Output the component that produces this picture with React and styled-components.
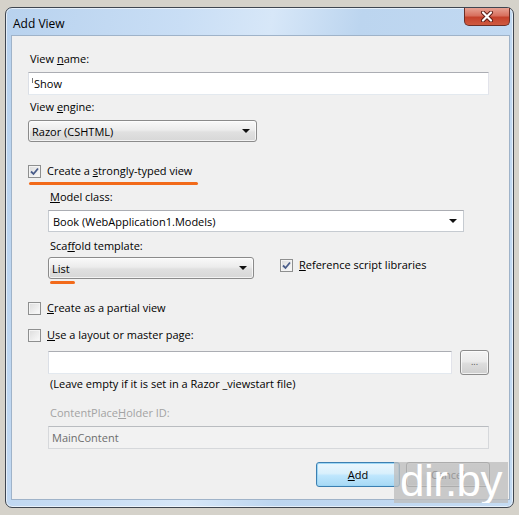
import React from 'react'
import styled, { createGlobalStyle } from 'styled-components'

const GlobalStyle = createGlobalStyle`
    body {
        margin: 0;
        background: #d5d2ca;
        font-family: "Open Sans", "Noto Sans", sans-serif;
        font-size: 11px;
        color: #000;
    }
`
const Page = styled.div`
    width: 519px;
    height: 515px;
    padding: 7px 0 0 5px;
    box-sizing: border-box;
`
const Window = styled.div`
    position: relative;
    width: 509px;
    height: 501px;
    box-sizing: border-box;
    border: 1px solid #3f4650;
    border-radius: 7px;
    padding: 0 3px 7px 5px;
    display: flex;
    flex-direction: column;
    background: linear-gradient(100deg, #b8d2ee 0%, #c9def5 30%, #d7e7f8 45%, #bcd5ef 60%, #c4dbf3 100%);
    box-shadow: inset 0 0 0 1px rgba(255,255,255,0.6);
`
const TitleBar = styled.div`
    height: 27px;
    display: flex;
    align-items: flex-start;
    justify-content: space-between;
`
const Title = styled.div`
    font-size: 12px;
    padding: 8px 0 0 2px;
    line-height: 16px;
`
const CloseButton = styled.div`
    width: 46px;
    height: 18px;
    box-sizing: border-box;
    border: 1px solid #6c2e26;
    border-top: none;
    border-radius: 0 0 5px 5px;
    background: linear-gradient(#e7a293 0%, #d8705e 45%, #c5422c 55%, #cf5a40 100%);
    display: flex;
    align-items: center;
    justify-content: center;
`
const Client = styled.div`
    flex: 1;
    border: 1px solid #9fb3c9;
    background: #f0f0f0;
    padding: 0 20px 0 16px;
    display: flex;
    flex-direction: column;
`
const Label = styled.div`
    line-height: 16px;
    height: 16px;
    margin-top: ${p => p.mt}px;
    padding-left: ${p => p.indent ? 22 : 2}px;
    color: ${p => p.disabled ? '#a3a3a3' : '#000'};
    white-space: nowrap;
`
const TextBox = styled.div`
    height: 23px;
    box-sizing: border-box;
    margin-top: ${p => p.mt || 0}px;
    margin-left: ${p => p.indent ? 20 : 0}px;
    flex: ${p => p.grow ? 1 : 'none'};
    border: 1px solid;
    border-color: ${p => p.disabled ? '#b9bcc0 #d6d8db #d6d8db #d6d8db' : '#abadb3 #e2e3ea #e3e9ef #dbdfe6'};
    background: ${p => p.disabled ? '#f2f2f2' : '#fff'};
    color: ${p => p.disabled ? '#6d6d6d' : '#000'};
    padding-left: 3px;
    line-height: 21px;
    display: flex;
    align-items: center;
`
const Caret = styled.span`
    width: 1px;
    height: 5px;
    background: #777;
    margin: -6px 1px 0 0;
`
const Combo = styled.div`
    position: relative;
    width: ${p => p.width}px;
    height: 22px;
    box-sizing: border-box;
    margin-top: ${p => p.mt || 0}px;
    margin-left: ${p => p.indent ? 20 : 0}px;
    border: 1px solid ${p => p.flat ? '#c6cbd1' : '#8b8b8b'};
    border-top-color: ${p => p.flat ? '#abadb3' : '#8b8b8b'};
    border-radius: ${p => p.flat ? 0 : 3}px;
    background: ${p => p.flat ? '#fff' : 'linear-gradient(#f9f9f9 0%, #ececec 45%, #e0e0e0 55%, #d7d7d7 100%)'};
    box-shadow: ${p => p.flat ? 'none' : 'inset 0 0 0 1px rgba(255,255,255,0.7)'};
    display: flex;
    align-items: center;
    justify-content: space-between;
    padding: 0 6px 0 ${p => p.flat ? 4 : 3}px;
`
const Arrow = styled.span`
    width: 0;
    height: 0;
    border-left: 4px solid transparent;
    border-right: 4px solid transparent;
    border-top: 4px solid #111;
`
const Mark = styled.span`
    position: absolute;
    left: ${p => p.left}px;
    bottom: -6px;
    width: ${p => p.width}px;
    height: 3px;
    border-radius: 2px;
    background: #f26a1a;
`
const CheckRow = styled.div`
    position: relative;
    display: flex;
    align-items: center;
    align-self: flex-start;
    height: 16px;
    line-height: 16px;
    margin-top: ${p => p.mt || 0}px;
    margin-left: ${p => p.ml || 0}px;
    gap: 6px;
    white-space: nowrap;
`
const Box = styled.span`
    width: 13px;
    height: 13px;
    box-sizing: border-box;
    border: 1px solid #8e8f8f;
    background: linear-gradient(135deg, #dcdcdc, #fbfbfb);
    box-shadow: inset 0 0 0 1px #f4f4f4;
    display: flex;
    align-items: center;
    justify-content: center;
`
const Row = styled.div`
    display: flex;
    align-items: center;
    margin-top: ${p => p.mt || 0}px;
    margin-left: ${p => p.indent ? 20 : 0}px;
`
const SmallButton = styled.div`
    width: 29px;
    height: 25px;
    box-sizing: border-box;
    margin-left: 8px;
    border: 1px solid #8b8b8b;
    border-radius: 3px;
    background: linear-gradient(#f4f4f4 0%, #ebebeb 45%, #dddddd 55%, #cfcfcf 100%);
    box-shadow: inset 0 0 0 1px rgba(255,255,255,0.7);
    color: #555;
    font-size: 9px;
    display: flex;
    align-items: center;
    justify-content: center;
    padding-bottom: 3px;
`
const ButtonBar = styled.div`
    display: flex;
    justify-content: flex-end;
    gap: 6px;
    margin-top: 13px;
    margin-right: -1px;
`
const Button = styled.div`
    width: 84px;
    height: 25px;
    box-sizing: border-box;
    border: 1px solid ${p => p.primary ? '#3c7fb1' : '#707070'};
    border-radius: 3px;
    background: ${p => p.primary
        ? 'linear-gradient(#eaf6fd 0%, #d9f0fc 45%, #bee6fd 55%, #a7d9f5 100%)'
        : 'linear-gradient(#f2f2f2 0%, #ebebeb 45%, #dddddd 55%, #cfcfcf 100%)'};
    box-shadow: inset 0 0 0 1px ${p => p.primary ? '#9ed7f5' : 'rgba(255,255,255,0.7)'};
    display: flex;
    align-items: center;
    justify-content: center;
    font-size: 11px;
`
const Watermark = styled.div`
    position: absolute;
    left: 388px;
    top: 454px;
    width: 114px;
    height: 41px;
    background: rgba(190, 190, 190, 0.78);
    color: #fff;
    font-family: "Liberation Sans", Arial, sans-serif;
    font-size: 44px;
    line-height: 38px;
    text-align: center;
    overflow: hidden;
    letter-spacing: -0.5px;
`

const Check = ({ checked }) => (
    <Box>
        {checked && (
            <svg width="9" height="9" viewBox="0 0 9 9">
                <path d="M1 4.5 L3.5 7 L8 1.5" fill="none" stroke="#4a5d8a" strokeWidth="1.8" />
            </svg>
        )}
    </Box>
)

const App = () => {
    return (
        <Page>
            <GlobalStyle />
            <Window>
                <TitleBar>
                    <Title>Add View</Title>
                    <CloseButton>
                        <svg width="14" height="11" viewBox="0 0 14 11">
                            <path d="M3 1.5 L11 9.5 M11 1.5 L3 9.5" stroke="#5a1a12" strokeWidth="4" strokeLinecap="round" />
                            <path d="M3 1.5 L11 9.5 M11 1.5 L3 9.5" stroke="#fff" strokeWidth="2.2" strokeLinecap="round" />
                        </svg>
                    </CloseButton>
                </TitleBar>
                <Client>
                    <Label mt={15}>View <u>n</u>ame:</Label>
                    <TextBox mt={5}><Caret />Show</TextBox>
                    <Label mt={4}>View <u>e</u>ngine:</Label>
                    <Combo mt={5} width={229}>Razor (CSHTML)<Arrow /></Combo>

                    <CheckRow mt={21}>
                        <Check checked />
                        <span>Create a <u>s</u>trongly-typed view</span>
                        <Mark left={1} width={169} />
                    </CheckRow>
                    <Label mt={10} indent><u>M</u>odel class:</Label>
                    <Combo mt={5} indent flat width={416}>Book (WebApplication1.Models)<Arrow /></Combo>
                    <Label mt={6} indent>Sca<u>f</u>fold template:</Label>
                    <Row mt={3} indent>
                        <Combo width={206}>
                            List<Arrow />
                            <Mark left={1} width={25} />
                        </Combo>
                        <CheckRow ml={26}>
                            <Check checked />
                            <span><u>R</u>eference script libraries</span>
                        </CheckRow>
                    </Row>

                    <CheckRow mt={21}>
                        <Check />
                        <span><u>C</u>reate as a partial view</span>
                    </CheckRow>
                    <CheckRow mt={11}>
                        <Check />
                        <span><u>U</u>se a layout or master page:</span>
                    </CheckRow>
                    <Row mt={7} indent>
                        <TextBox grow />
                        <SmallButton>...</SmallButton>
                    </Row>
                    <Label mt={1} indent>(Leave empty if it is set in a Razor _viewstart file)</Label>
                    <Label mt={13} indent disabled>ContentPlace<u>H</u>older ID:</Label>
                    <TextBox mt={5} indent disabled>MainContent</TextBox>

                    <ButtonBar>
                        <Button primary><span><u>A</u>dd</span></Button>
                        <Button>Cancel</Button>
                    </ButtonBar>
                </Client>
                <Watermark>dir.by</Watermark>
            </Window>
        </Page>
    )
}

export default App
